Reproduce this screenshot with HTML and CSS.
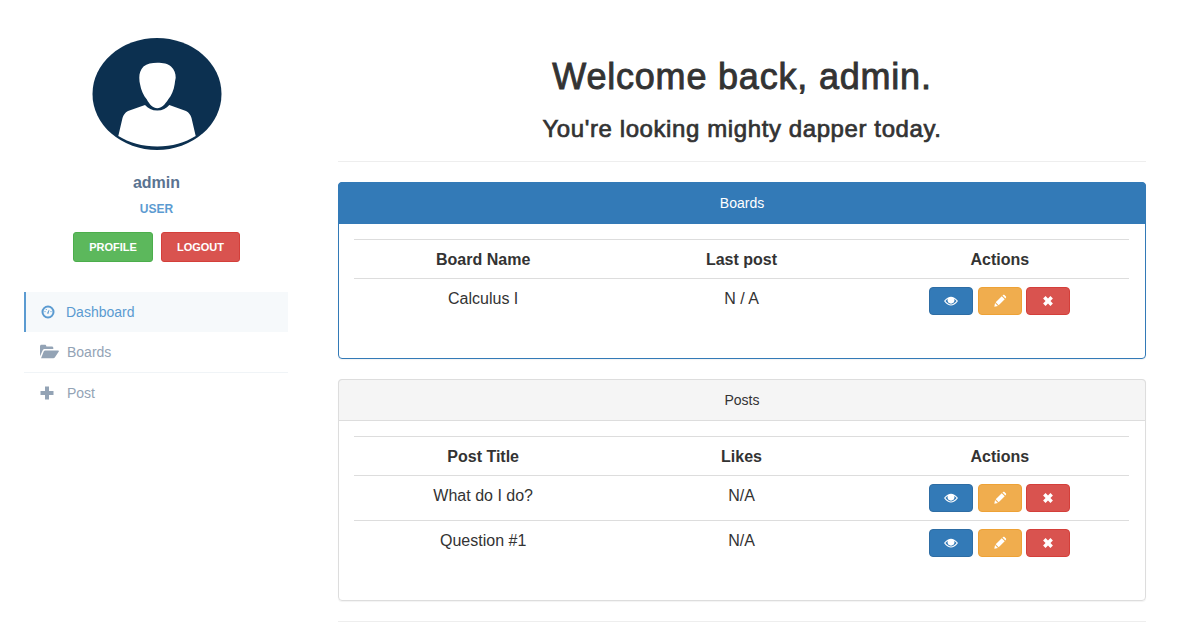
FILE: index.html
```html
<!DOCTYPE html>
<html lang="en">
<head>
<meta charset="UTF-8" />
<meta name="viewport" content="width=device-width, initial-scale=1" />
<title>Dashboard</title>
<link rel="stylesheet" href="styles.css">
</head>
<body>

<svg class="sprite" aria-hidden="true">
  <symbol id="i-eye" viewBox="0 0 16 16">
    <path fill-rule="evenodd" d="M0 8C3 4 5.500 3 8 3s5 1 8 5c-3 4-5.500 5-8 5s-5-1-8-5zm1.600 0C3.800 10.700 5.800 11.900 8 11.900S12.200 10.700 14.400 8C13.400 6.800 12.500 6 11.500 5.300 11.800 5.900 12 6.500 12 7.200 12 9.400 10.200 11 8 11S4 9.400 4 7.200C4 6.500 4.200 5.900 4.500 5.300 3.500 6 2.600 6.800 1.600 8z"/>
    <path d="M8 4.300a3 3 0 1 0 3 3 1.300 1.300 0 0 1-2.500-.4c0-.9.300-1.600 1-2A3 3 0 0 0 8 4.300z"/>
  </symbol>
  <symbol id="i-pencil" viewBox="0 0 16 16">
    <path d="M1.500 14.500l.8-4.200 3.400 3.400zM3.100 9.500L10 2.600l3.400 3.400-6.900 6.900zM10.800 1.800l.8-.6c.5-.4 1.100-.4 1.500 0l1.700 1.700c.4.400.4 1 0 1.500l-.6.800z"/>
  </symbol>
  <symbol id="i-remove" viewBox="0 0 16 16">
    <path d="M2.400 5.200l2.800-2.800L8 5.200l2.800-2.800 2.800 2.800L10.800 8l2.800 2.800-2.800 2.800L8 10.800l-2.800 2.800-2.800-2.800L5.200 8z"/>
  </symbol>
</svg>

<div class="page">
  <aside class="sidebar">
    <svg class="avatar" viewBox="0 0 130 112" aria-hidden="true">
      <ellipse cx="65" cy="56" rx="64.500" ry="56" fill="#0c3050"/>
      <path fill="#fff" d="M65.300 24.700C71 24.700 76 25.500 79 28.500 82.500 31.500 83.700 35.500 83.700 39.700L83 43.500 82.700 46C81.800 52 79.500 57.500 76.300 61.300 73 66.500 69.500 70.300 65.300 70.300 61 70.300 57.500 66.500 54.700 61.300 51.500 57.500 49 52 48 46L47.500 43.500 47.300 39.700C47.300 35.500 48.500 31.500 51.500 28.500 55 25.500 60 24.700 65.300 24.700z"/>
      <path fill="#fff" d="M53 67C56 70.500 60 72.600 65.300 72.600 70.500 72.600 74.500 70.500 77.300 67L94 73C97 74.500 98.500 77 99.500 80L103.700 98C93 104.500 80 108.500 65.300 108.500 50.500 108.500 37 104.500 26.300 98L30.500 80C31.500 77 33 74.500 36 73z"/>
    </svg>
    <div class="user-name">admin</div>
    <div class="user-role">USER</div>
    <div class="user-buttons">
      <button class="btn-small btn-green" type="button">PROFILE</button>
      <button class="btn-small btn-red" type="button">LOGOUT</button>
    </div>
    <ul class="side-nav">
      <li class="active">
        <a href="#">
          <svg class="nav-icon gauge" viewBox="0 0 14 14" aria-hidden="true">
            <path fill-rule="evenodd" d="M7 .5a6.500 6.500 0 1 1 0 13 6.500 6.500 0 0 1 0-13zM7 2.500a4.500 4.500 0 1 0 0 9 4.500 4.500 0 0 0 0-9z"/>
            <path d="M6.400 7.400L7.900 4.800l.5.200-.7 2.700a.8.800 0 1 1-1.300-.3z"/>
            <circle cx="4" cy="6.600" r=".6"/><circle cx="5.300" cy="4.500" r=".6"/><circle cx="10" cy="6.600" r=".6"/>
          </svg>
          Dashboard
        </a>
      </li>
      <li class="divided">
        <a href="#">
          <svg class="nav-icon wide" viewBox="0 0 18 14" aria-hidden="true">
            <path d="M0 11.500V2C0 1.200.6.600 1.300.6h3.400c.7 0 1.300.6 1.300 1.400v.3h5.300c.7 0 1.300.6 1.300 1.300v1.100H4.600C3.700 4.700 3 5.100 2.600 5.900z"/>
            <path d="M1 13.400h11.600c.6 0 1.100-.3 1.400-.8L17.800 7c.3-.5 0-1-.6-1H5c-.6 0-1.100.3-1.400.8z"/>
          </svg>
          Boards
        </a>
      </li>
      <li>
        <a href="#">
          <svg class="nav-icon plus" viewBox="0 0 14 14" aria-hidden="true">
            <path d="M5 .5h4v4.500h4.500v4H9v4.500H5V9H.5V5H5z"/>
          </svg>
          Post
        </a>
      </li>
    </ul>
  </aside>

  <main class="content">
    <h1>Welcome back, admin.</h1>
    <h2>You're looking mighty dapper today.</h2>
    <hr>

    <section class="panel panel-primary">
      <div class="panel-heading">Boards</div>
      <div class="panel-body">
        <table>
          <thead>
            <tr><th>Board Name</th><th>Last post</th><th>Actions</th></tr>
          </thead>
          <tbody>
            <tr>
              <td>Calculus I</td>
              <td>N / A</td>
              <td class="actions">
                <button class="btn btn-blue" type="button"><svg class="btn-icon"><use href="#i-eye"/></svg></button>
                <button class="btn btn-orange" type="button"><svg class="btn-icon"><use href="#i-pencil"/></svg></button>
                <button class="btn btn-red" type="button"><svg class="btn-icon"><use href="#i-remove"/></svg></button>
              </td>
            </tr>
          </tbody>
        </table>
      </div>
    </section>

    <section class="panel">
      <div class="panel-heading">Posts</div>
      <div class="panel-body">
        <table>
          <thead>
            <tr><th>Post Title</th><th>Likes</th><th>Actions</th></tr>
          </thead>
          <tbody>
            <tr>
              <td>What do I do?</td>
              <td>N/A</td>
              <td class="actions">
                <button class="btn btn-blue" type="button"><svg class="btn-icon"><use href="#i-eye"/></svg></button>
                <button class="btn btn-orange" type="button"><svg class="btn-icon"><use href="#i-pencil"/></svg></button>
                <button class="btn btn-red" type="button"><svg class="btn-icon"><use href="#i-remove"/></svg></button>
              </td>
            </tr>
            <tr>
              <td>Question #1</td>
              <td>N/A</td>
              <td class="actions">
                <button class="btn btn-blue" type="button"><svg class="btn-icon"><use href="#i-eye"/></svg></button>
                <button class="btn btn-orange" type="button"><svg class="btn-icon"><use href="#i-pencil"/></svg></button>
                <button class="btn btn-red" type="button"><svg class="btn-icon"><use href="#i-remove"/></svg></button>
              </td>
            </tr>
          </tbody>
        </table>
      </div>
    </section>
    <hr>
  </main>
</div>

</body>
</html>
```

FILE: styles.css
```css
* {
  box-sizing: border-box;
}
body {
  margin: 0;
  font-family: "Liberation Sans", Arial, sans-serif;
  font-size: 16px;
  line-height: 1.42857;
  color: #333;
  background: #fff;
}
.sprite {
  display: none;
}
.page {
  display: flex;
  align-items: flex-start;
  padding: 0 47px 0 24px;
}
.sidebar {
  width: 264px;
  flex: none;
  padding-top: 38px;
  text-align: center;
}
.avatar {
  display: block;
  width: 130px;
  height: 112px;
  margin: 0 0 0 68px;
}
.user-name {
  margin-top: 22px;
  padding-left: 1px;
  font-size: 16px;
  font-weight: bold;
  color: #5a7391;
}
.user-role {
  margin-top: 6px;
  padding-left: 1px;
  font-size: 12px;
  font-weight: bold;
  color: #5b9bd1;
}
.user-buttons {
  display: flex;
  justify-content: center;
  gap: 8px;
  margin: 14px 0 0 1px;
}
.btn-small {
  height: 30px;
  padding: 0 15px;
  border: 1px solid;
  border-radius: 3px;
  font-family: inherit;
  font-size: 11px;
  font-weight: bold;
  color: #fff;
}
.btn-small.btn-green {
  min-width: 80px;
}
.side-nav {
  list-style: none;
  margin: 30px 0 0;
  padding: 0;
  text-align: left;
  font-size: 14px;
}
.side-nav a {
  display: flex;
  align-items: center;
  height: 40px;
  padding: 2px 0 0 16px;
  color: #93a3b5;
  text-decoration: none;
}
.side-nav .divided {
  border-bottom: 1px solid #f0f4f7;
}
.side-nav .active a {
  padding-left: 15px;
  border-left: 2px solid #5b9bd1;
  background: #f6f9fb;
  color: #5b9bd1;
}
.nav-icon {
  width: 14px;
  height: 14px;
  margin: -2px 12px 0 0;
  fill: currentColor;
}
.nav-icon.gauge {
  margin-right: 11px;
}
.nav-icon.plus {
  margin-right: 13px;
}
.nav-icon.wide {
  width: 19px;
  height: 15px;
  margin-right: 8px;
}
.content {
  flex: 1;
  margin-left: 50px;
  padding-top: 51px;
}
h1, h2 {
  margin: 0;
  text-align: center;
  font-weight: normal;
}
h1 {
  font-size: 36px;
  line-height: 52px;
  letter-spacing: 0.8px;
  -webkit-text-stroke: 0.9px #333;
}
h2 {
  margin-top: 9px;
  font-size: 24px;
  line-height: 34px;
  letter-spacing: 0.6px;
  -webkit-text-stroke: 0.7px #333;
}
hr {
  height: 1px;
  margin: 15px 0 20px;
  border: 0;
  background: #eee;
}
.panel {
  margin-bottom: 20px;
  border: 1px solid #ddd;
  border-radius: 4px;
  box-shadow: 0 1px 1px rgba(0, 0, 0, 0.05);
}
.panel-heading {
  height: 42px;
  margin: -1px -1px 0;
  padding-top: 10px;
  border: 1px solid #ddd;
  border-radius: 4px 4px 0 0;
  background: #f5f5f5;
  text-align: center;
  font-size: 14px;
  line-height: 20px;
}
.panel-primary {
  border-color: #337ab7;
}
.panel-primary .panel-heading {
  border-color: #337ab7;
  background: #337ab7;
  color: #fff;
}
.panel-body {
  padding: 15px 16px 15px 15px;
}
table {
  width: 100%;
  margin-bottom: 20px;
  border-collapse: collapse;
  table-layout: fixed;
}
th, td {
  padding: 9px 8px 7px;
  line-height: 22px;
  text-align: center;
  vertical-align: top;
  border-top: 1px solid #ddd;
}
.actions {
  padding: 8px;
  font-size: 0;
}
.btn {
  width: 44px;
  height: 28px;
  padding: 0;
  border: 1px solid;
  border-radius: 4px;
  vertical-align: top;
}
.btn + .btn {
  margin-left: 4px;
}
.btn-blue {
  margin-right: 1px;
  background: #337ab7;
  border-color: #2e6da4;
}
.btn-orange {
  background: #f0ad4e;
  border-color: #eea236;
}
.btn-green {
  background: #5cb85c;
  border-color: #4cae4c;
}
.btn-red {
  background: #d9534f;
  border-color: #d43f3a;
}
.btn-icon {
  display: block;
  width: 14px;
  height: 14px;
  margin: 0 auto;
  fill: #fff;
}
```
